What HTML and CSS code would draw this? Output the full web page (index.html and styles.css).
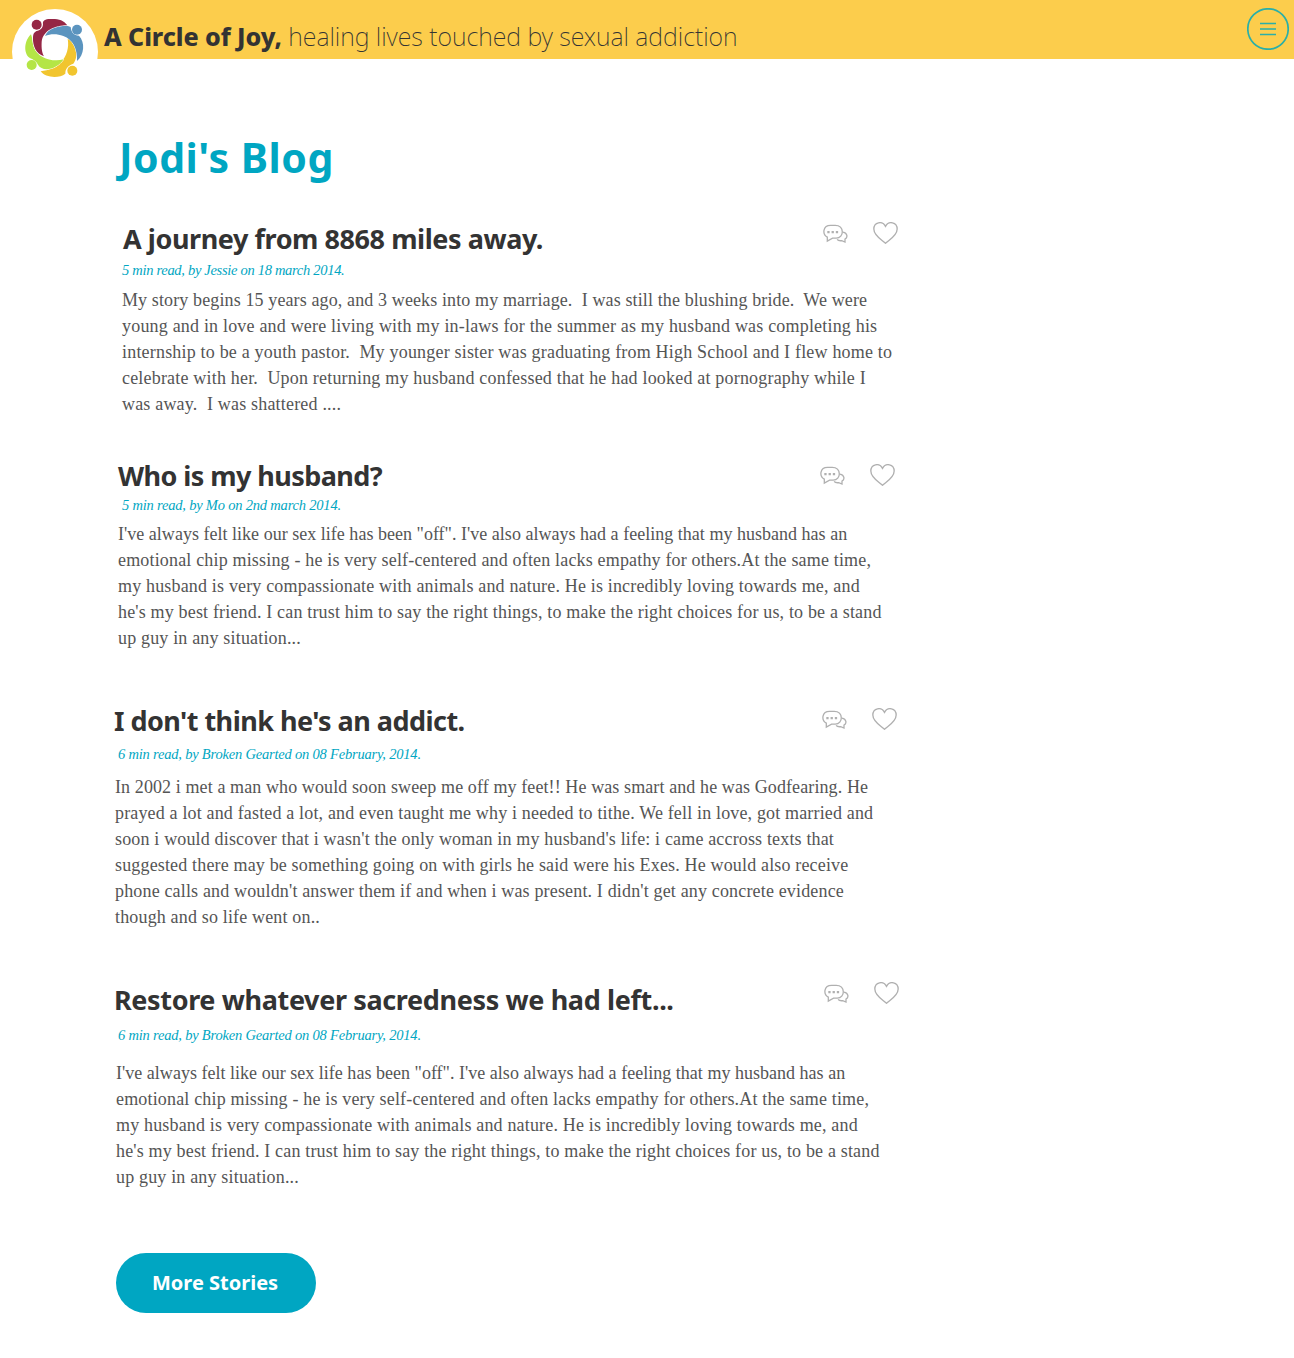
FILE: index.html
```
<!DOCTYPE html>
<html lang="en">
<head>
<meta charset="utf-8">
<title>Jodi's Blog - A Circle of Joy</title>
<link rel="stylesheet" href="styles.css">
</head>
<body>
<svg class="defs" aria-hidden="true">
  <symbol id="comments" viewBox="38 28 74 58">
    <path d="M50 80 V68 C34 59 36 32 60 32 H74 C103 32 102 71 77 71 H66 Z"/>
    <path d="M98 53 C112 56 113 69 104 74 V83 L94 79 C85 80 82 78 80 75"/>
    <path class="dots" d="M50 49h7v7h-7zM63 49h7v7h-7zM76 49h7v7h-7z"/>
  </symbol>
  <symbol id="heart" viewBox="188 22 74 66">
    <path d="M225 86 C213 75 190 63 190 43 C190 22 216 17 225 35 C234 17 260 22 260 43 C260 63 237 75 225 86 Z"/>
  </symbol>
</svg>
<header class="topbar">
  <a class="logo" href="#" aria-label="Home">
    <svg viewBox="36 27 258 258">
      <g fill="#f1c52f"><path d="M122 214 C136 234 178 236 196 221 C196 206 203 197 220 191 C239 168 227 122 203 116 C208 141 200 170 183 185 C168 203 147 210 122 214 Z"/><circle cx="217" cy="212" r="15"/></g>
      <g fill="#b4e546"><path d="M93 103 C68 128 73 166 91 175 C101 179 108 184 114 194 C126 216 169 211 191 178 C157 188 113 173 102 143 C97 130 98 114 93 103 Z"/><circle cx="95" cy="195" r="15"/></g>
      <g fill="#5b94bf"><path d="M135 108 C150 77 185 69 212 81 C214 99 222 106 237 107 C256 127 253 164 231 183 C233 148 219 118 190 108 C170 101 151 102 135 108 Z"/><circle cx="231" cy="89" r="15"/></g>
      <g fill="#952745"><path d="M129 73 C127 61 136 57 150 57 C174 56 190 59 202 76 C165 76 129 91 125 126 C124 146 126 158 132 169 C108 162 98 137 99 115 C99 97 106 94 117 91 C124 88 129 82 129 73 Z"/><circle cx="110" cy="74" r="15"/></g>
    </svg>
  </a>
  <p class="tagline"><strong>A Circle of Joy,</strong> <span>healing lives touched by sexual addiction</span></p>
  <button class="menu" aria-label="Menu">
    <svg viewBox="0 0 42 42"><circle cx="21" cy="21" r="20.2"/><path d="M13 15.5h16M13 21h16M13 26.5h16"/></svg>
  </button>
</header>
<main class="blog">
  <h1>Jodi's Blog</h1>

  <article class="story story-journey">
    <div class="head">
      <h2>A journey from 8868 miles away.</h2>
      <div class="actions"><svg class="comments"><use href="#comments"/></svg><svg class="heart"><use href="#heart"/></svg></div>
    </div>
    <p class="meta">5 min read, by Jessie on 18 march 2014.</p>
    <p class="excerpt">My story begins 15 years ago, and 3 weeks into my marriage.  I was still the blushing bride.  We were
young and in love and were living with my in-laws for the summer as my husband was completing his
internship to be a youth pastor.  My younger sister was graduating from High School and I flew home to
celebrate with her.  Upon returning my husband confessed that he had looked at pornography while I
was away.  I was shattered ....</p>
  </article>

  <article class="story story-husband">
    <div class="head">
      <h2>Who is my husband?</h2>
      <div class="actions"><svg class="comments"><use href="#comments"/></svg><svg class="heart"><use href="#heart"/></svg></div>
    </div>
    <p class="meta">5 min read, by Mo on 2nd march 2014.</p>
    <p class="excerpt">I've always felt like our sex life has been "off". I've also always had a feeling that my husband has an
emotional chip missing - he is very self-centered and often lacks empathy for others.At the same time,
my husband is very compassionate with animals and nature. He is incredibly loving towards me, and
he's my best friend. I can trust him to say the right things, to make the right choices for us, to be a stand
up guy in any situation...</p>
  </article>

  <article class="story story-addict">
    <div class="head">
      <h2>I don't think he's an addict.</h2>
      <div class="actions"><svg class="comments"><use href="#comments"/></svg><svg class="heart"><use href="#heart"/></svg></div>
    </div>
    <p class="meta">6 min read, by Broken Gearted on 08 February, 2014.</p>
    <p class="excerpt">In 2002 i met a man who would soon sweep me off my feet!! He was smart and he was Godfearing. He
prayed a lot and fasted a lot, and even taught me why i needed to tithe. We fell in love, got married and
soon i would discover that i wasn't the only woman in my husband's life: i came accross texts that
suggested there may be something going on with girls he said were his Exes. He would also receive
phone calls and wouldn't answer them if and when i was present. I didn't get any concrete evidence
though and so life went on..</p>
  </article>

  <article class="story story-restore">
    <div class="head">
      <h2>Restore whatever sacredness we had left...</h2>
      <div class="actions"><svg class="comments"><use href="#comments"/></svg><svg class="heart"><use href="#heart"/></svg></div>
    </div>
    <p class="meta">6 min read, by Broken Gearted on 08 February, 2014.</p>
    <p class="excerpt">I've always felt like our sex life has been "off". I've also always had a feeling that my husband has an
emotional chip missing - he is very self-centered and often lacks empathy for others.At the same time,
my husband is very compassionate with animals and nature. He is incredibly loving towards me, and
he's my best friend. I can trust him to say the right things, to make the right choices for us, to be a stand
up guy in any situation...</p>
  </article>

  <a class="more" href="#">More Stories</a>
</main>
</body>
</html>
```
FILE: styles.css
```
* { box-sizing: border-box; margin: 0; padding: 0; }

body {
  background: #fff;
  color: #555;
  font-family: "Liberation Serif", serif;
}

.defs { display: none; }

.topbar {
  display: flex;
  align-items: flex-start;
  height: 59px;
  padding: 8px 5px 0 12px;
  background: #fccd4c;
}

.logo {
  width: 86px;
  height: 86px;
  margin-top: 1px;
  border-radius: 50%;
  background: #fff;
}

.logo svg { display: block; width: 86px; height: 86px; }
.logo path { stroke: #fff; stroke-width: 3; paint-order: stroke; }

.tagline {
  margin: 10px auto 0 6px;
  color: #333;
  font: 200 25px/36px "Noto Sans", sans-serif;
  white-space: nowrap;
}

.tagline strong { font-weight: 800; letter-spacing: -0.06px; }
.tagline span { letter-spacing: -0.04px; }

.menu {
  width: 42px;
  height: 42px;
  border: 0;
  background: none;
}

.menu svg {
  display: block;
  width: 42px;
  height: 42px;
  fill: none;
  stroke: #2aafa8;
  stroke-width: 1.7;
}

.blog { padding: 71px 0 45px 115px; }

h1 {
  height: 56px;
  margin: 0 0 35px 4px;
  color: #00a6c2;
  font: 700 41px/54px "Noto Sans", sans-serif;
  letter-spacing: 0.5px;
}

.story { width: 782.5px; }

.head {
  display: flex;
  justify-content: space-between;
  height: 36px;
}

h2 {
  color: #333;
  font: 700 27px/36px "Noto Sans", sans-serif;
  letter-spacing: -0.43px;
  white-space: nowrap;
}

.actions {
  display: flex;
  gap: 25px;
  fill: none;
  stroke: #b0b0b0;
  stroke-width: 4;
}

.comments { width: 25px; height: 19px; margin-top: 2px; }
.heart { width: 25px; height: 22px; }
.dots { fill: #b0b0b0; stroke: none; }

.meta {
  color: #00a6c2;
  font-size: 14.5px;
  font-style: italic;
  line-height: 20px;
  letter-spacing: -0.2px;
  white-space: nowrap;
}

.excerpt {
  font-size: 18px;
  line-height: 26px;
  letter-spacing: 0.17px;
  white-space: pre;
}

.story-journey { margin-bottom: 41px; }
.story-journey .head { padding-left: 8px; }
.story-journey .actions { padding-top: 1px; }
.story-journey .meta { margin: 3px 0 7px 7px; letter-spacing: -0.3px; }
.story-journey .excerpt { margin-left: 7px; letter-spacing: 0.19px; }
.story-journey .excerpt::first-line { letter-spacing: 0.12px; }

.story-husband { width: 779.5px; margin-bottom: 52px; }
.story-husband .head { padding-left: 3px; }
.story-husband h2 { letter-spacing: -0.57px; }
.story-husband .actions { padding-top: 6px; }
.story-husband .meta { margin: 1px 0 6px 7px; }
.story-husband .excerpt { margin-left: 3px; }
.story-husband .excerpt::first-line { letter-spacing: 0.02px; }

.story-addict { width: 781.5px; margin-bottom: 52px; }
.story-addict h2 { margin-left: -1px; letter-spacing: -0.53px; }
.story-addict .actions { padding-top: 5px; }
.story-addict .meta { margin: 5px 0 10px 3px; }
.story-addict .excerpt { letter-spacing: 0.16px; }
.story-addict .excerpt::first-line { letter-spacing: 0.1px; }

.story-restore { width: 783.5px; margin-bottom: 63px; }
.story-restore h2 { margin-left: -1px; letter-spacing: -0.36px; }
.story-restore .meta { margin: 7px 0 15px 3px; }
.story-restore .excerpt { margin-left: 1px; }
.story-restore .excerpt::first-line { letter-spacing: 0.02px; }

.more {
  display: flex;
  align-items: center;
  width: 200px;
  height: 60px;
  margin-left: 1px;
  padding-left: 36px;
  border-radius: 30px;
  background: #00a6c2;
  color: #fff;
  font: 700 20px/28px "Noto Sans", sans-serif;
  text-decoration: none;
}
```
